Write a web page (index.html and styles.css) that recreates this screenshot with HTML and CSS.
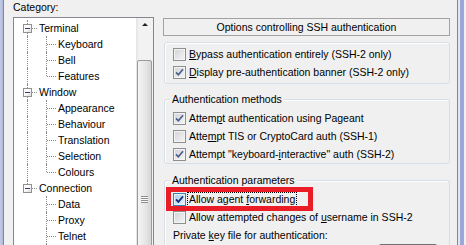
FILE: index.html
```html
<!DOCTYPE html>
<html>
<head>
<meta charset="utf-8">
<link rel="stylesheet" href="styles.css">
</head>
<body>
<div class="window">
  <div class="edge-left"></div>
  <div class="left-pane">
    <div class="cat-label">Cate<u>g</u>ory:</div>
    <div class="tree">
      <div class="tree-items">
        <div class="row"><span class="btn"><span class="box"></span></span><span class="lbl">Terminal</span></div>
        <div class="row"><span class="pipe on"></span><span class="branch"></span><span class="lbl">Keyboard</span></div>
        <div class="row"><span class="pipe on"></span><span class="branch"></span><span class="lbl">Bell</span></div>
        <div class="row"><span class="pipe on"></span><span class="branch last"></span><span class="lbl">Features</span></div>
        <div class="row"><span class="btn"><span class="box"></span></span><span class="lbl">Window</span></div>
        <div class="row"><span class="pipe on"></span><span class="branch"></span><span class="lbl">Appearance</span></div>
        <div class="row"><span class="pipe on"></span><span class="branch"></span><span class="lbl">Behaviour</span></div>
        <div class="row"><span class="pipe on"></span><span class="branch"></span><span class="lbl">Translation</span></div>
        <div class="row"><span class="pipe on"></span><span class="branch"></span><span class="lbl">Selection</span></div>
        <div class="row"><span class="pipe on"></span><span class="branch last"></span><span class="lbl">Colours</span></div>
        <div class="row"><span class="btn last"><span class="box"></span></span><span class="lbl">Connection</span></div>
        <div class="row"><span class="pipe"></span><span class="branch"></span><span class="lbl">Data</span></div>
        <div class="row"><span class="pipe"></span><span class="branch"></span><span class="lbl">Proxy</span></div>
        <div class="row"><span class="pipe"></span><span class="branch"></span><span class="lbl">Telnet</span></div>
        <div class="row"><span class="pipe"></span><span class="branch"></span></div>
      </div>
      <div class="scrollbar">
        <div class="sb-up"><span class="arrow-up"></span></div>
        <div class="sb-track">
          <div class="sb-thumb"><span class="grip"></span></div>
        </div>
      </div>
    </div>
  </div>
  <div class="right-pane">
    <div class="header">Options controlling SSH authentication</div>
    <div class="group first">
      <div class="opt"><span class="cb"></span><span class="txt"><u>B</u>ypass authentication entirely (SSH-2 only)</span></div>
      <div class="opt"><span class="cb"><svg viewBox="0 0 11 11" width="11" height="11"><path d="M2 5.3 L4.4 7.8 L9 2.3" fill="none" stroke="#4b5f8e" stroke-width="1.7"/></svg></span><span class="txt"><u>D</u>isplay pre-authentication banner (SSH-2 only)</span></div>
    </div>
    <div class="group">
      <div class="gtitle">Authentication methods</div>
      <div class="rows">
        <div class="opt"><span class="cb"><svg viewBox="0 0 11 11" width="11" height="11"><path d="M2 5.3 L4.4 7.8 L9 2.3" fill="none" stroke="#4b5f8e" stroke-width="1.7"/></svg></span><span class="txt">Attem<u>p</u>t authentication using Pageant</span></div>
        <div class="opt"><span class="cb"></span><span class="txt">Atte<u>m</u>pt TIS or CryptoCard auth (SSH-1)</span></div>
        <div class="opt"><span class="cb"><svg viewBox="0 0 11 11" width="11" height="11"><path d="M2 5.3 L4.4 7.8 L9 2.3" fill="none" stroke="#4b5f8e" stroke-width="1.7"/></svg></span><span class="txt">Attempt "keyboard-<u>i</u>nteractive" auth (SSH-2)</span></div>
      </div>
    </div>
    <div class="group last">
      <div class="gtitle">Authentication parameters</div>
      <div class="rows">
        <div class="opt"><span class="cb hot"><svg viewBox="0 0 11 11" width="11" height="11"><path d="M2 5.3 L4.4 7.8 L9 2.3" fill="none" stroke="#1a2f86" stroke-width="1.9"/></svg></span><span class="txt focus">Allow agent <u>f</u>orwarding</span></div>
        <div class="opt"><span class="cb"></span><span class="txt">Allow attempted changes of <u>u</u>sername in SSH-2</span></div>
        <div class="plain">Private <u>k</u>ey file for authentication:</div>
        <div class="browse-row"><span class="browse"></span></div>
      </div>
      <div class="highlight"></div>
    </div>
  </div>
  <div class="edge-right"></div>
</div>
</body>
</html>
```
FILE: styles.css
```css
html, body {
  margin: 0;
  padding: 0;
  background: #f0f0f0;
}
body {
  font-family: "Liberation Sans", Arial, sans-serif;
  font-size: 10.5px;
  color: #000;
  overflow: hidden;
}
.window {
  display: flex;
  width: 466px;
  height: 245px;
  overflow: hidden;
  background: #f0f0f0;
}
.edge-left {
  flex: none;
  width: 3px;
  background: linear-gradient(90deg, #c3cbe6, #aeb8dc);
  border-right: 1px solid #7e88a8;
}
.edge-right {
  flex: none;
  width: 6px;
  margin-left: 7px;
  border-left: 1px solid #7f8596;
  background: linear-gradient(90deg, #e4e7f1 0, #e4e7f1 2px, #9ca8da 2px, #9ca8da 100%);
}
.left-pane {
  flex: none;
  width: 150px;
  padding-left: 9px;
}
.cat-label {
  height: 15px;
  line-height: 15px;
  margin-bottom: 2px;
}
.tree {
  width: 141px;
  height: 320px;
  box-sizing: border-box;
  border: 1px solid #828790;
  background: #fff;
  display: flex;
}
.tree-items {
  flex: 1;
  padding-top: 2px;
  padding-left: 4px;
}
.row {
  display: flex;
  align-items: center;
  height: 16px;
}
.btn, .pipe, .branch {
  position: relative;
  flex: none;
  width: 19px;
  height: 16px;
}
.btn::before, .pipe.on::before, .branch::before {
  content: "";
  position: absolute;
  left: 9px;
  top: 0;
  bottom: 0;
  border-left: 1px dotted #8a8a8a;
}
.btn.last::before, .branch.last::before {
  bottom: 8px;
}
.btn::after, .branch::after {
  content: "";
  position: absolute;
  top: 8px;
  border-top: 1px dotted #8a8a8a;
}
.btn::after {
  left: 14px;
  width: 5px;
}
.branch::after {
  left: 10px;
  width: 9px;
}
.box {
  position: absolute;
  z-index: 1;
  left: 5px;
  top: 4px;
  width: 9px;
  height: 9px;
  box-sizing: border-box;
  border: 1px solid #919191;
  background: linear-gradient(135deg, #fff 40%, #dcdcdc);
}
.box::after {
  content: "";
  position: absolute;
  left: 1px;
  top: 3px;
  width: 5px;
  height: 1px;
  background: #2c3f6b;
}
.lbl {
  padding-left: 2px;
  line-height: 16px;
  white-space: nowrap;
}
.scrollbar {
  flex: none;
  width: 17px;
  display: flex;
  flex-direction: column;
  background: linear-gradient(90deg, #e3e3e3, #f2f2f2 3px, #f2f2f2);
}
.sb-up {
  height: 17px;
  display: flex;
  align-items: center;
  justify-content: center;
}
.arrow-up {
  width: 0;
  height: 0;
  border-left: 3px solid transparent;
  border-right: 3px solid transparent;
  border-bottom: 3px solid #202020;
  margin-top: -3px;
}
.sb-track {
  flex: 1;
  padding-top: 27px;
  padding-left: 1px;
}
.sb-thumb {
  width: 15px;
  height: 276px;
  box-sizing: border-box;
  border: 1px solid #9b9b9b;
  border-radius: 2px;
  background: linear-gradient(90deg, #f4f4f4, #e8e8e8 50%, #d6d6d6);
  display: flex;
  justify-content: center;
  padding-top: 135px;
}
.grip {
  width: 7px;
  height: 7px;
  background: repeating-linear-gradient(180deg, #8e8e8e 0, #8e8e8e 1px, #f8f8f8 1px, #f8f8f8 2px);
}
.right-pane {
  flex: none;
  width: 287px;
  padding-top: 18px;
}
.header {
  height: 18px;
  box-sizing: border-box;
  border: 1px solid #a3a3a3;
  line-height: 16px;
  text-align: center;
  white-space: nowrap;
}
.group {
  position: relative;
  margin-left: 1px;
  border: 1px solid #d5dfe5;
  border-radius: 3px;
  box-shadow: inset 1px 1px 0 #fff;
}
.group.first {
  margin-top: 6px;
  padding: 2px 0;
}
.group + .group {
  margin-top: 15px;
}
.group.last {
  margin-top: 16px;
  border-bottom: none;
}
.gtitle {
  margin-top: -8px;
  margin-left: 5px;
  padding: 0 2px;
  width: fit-content;
  height: 14px;
  line-height: 14px;
  background: #f0f0f0;
}
.rows {
  padding-top: 3px;
}
.opt {
  display: flex;
  align-items: center;
  height: 18px;
  padding-left: 8px;
  white-space: nowrap;
}
.plain {
  height: 18px;
  line-height: 18px;
  padding-left: 8px;
  white-space: nowrap;
}
.cb {
  flex: none;
  width: 13px;
  height: 13px;
  box-sizing: border-box;
  border: 1px solid #8e8f8f;
  box-shadow: inset 0 0 0 1px #f4f4f4;
  background: linear-gradient(135deg, #cfd1d5, #f7f7f7);
  display: flex;
  align-items: center;
  justify-content: center;
}
.cb svg {
  display: block;
}
.cb.hot {
  border-color: #3c7fb1;
  box-shadow: inset 0 0 0 1px #e5f2fc;
  background: linear-gradient(135deg, #a9cdef, #eaf4fd);
}
.txt {
  margin-left: 1px;
  border: 1px solid transparent;
  padding: 0 1px;
  line-height: 13px;
}
.txt.focus {
  border: 1px dotted #000;
}
.browse-row {
  display: flex;
  justify-content: flex-end;
  padding-right: 11px;
}
.browse {
  width: 60px;
  height: 22px;
  box-sizing: border-box;
  border: 1px solid #707070;
  border-radius: 3px;
  background: linear-gradient(180deg, #f2f2f2, #ebebeb 50%, #dddddd);
}
.highlight {
  position: absolute;
  left: 1px;
  top: 6px;
  width: 147px;
  height: 24px;
  box-sizing: border-box;
  border: 5px solid #ea1c25;
}
```
